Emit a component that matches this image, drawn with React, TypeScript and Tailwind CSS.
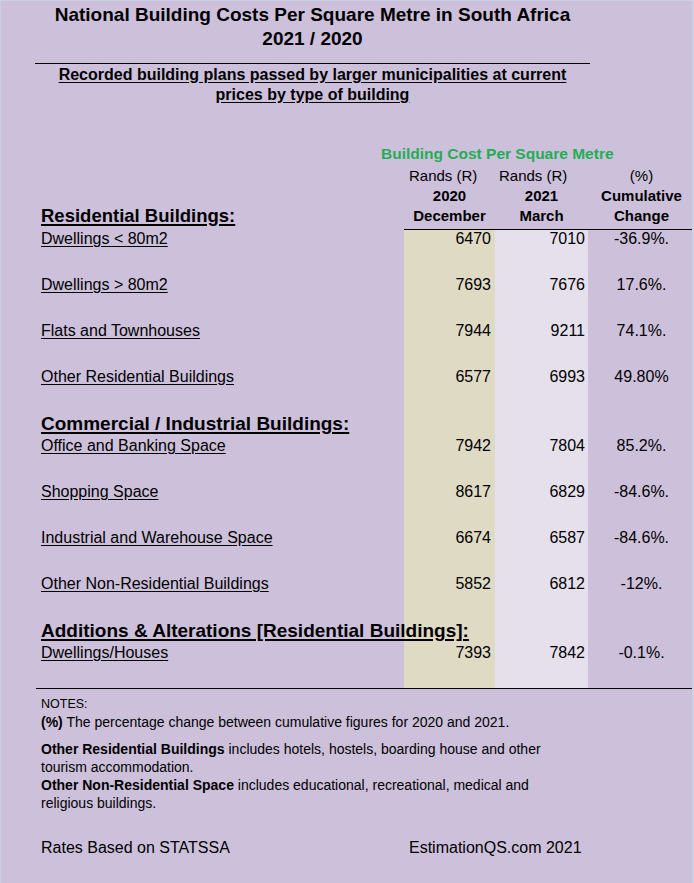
import React from 'react';

type Row = { label: string; dec: string; mar: string; change: string };

const residential: Row[] = [
  { label: 'Dwellings < 80m2', dec: '6470', mar: '7010', change: '-36.9%.' },
  { label: 'Dwellings > 80m2', dec: '7693', mar: '7676', change: '17.6%.' },
  { label: 'Flats and Townhouses', dec: '7944', mar: '9211', change: '74.1%.' },
  { label: 'Other Residential Buildings', dec: '6577', mar: '6993', change: '49.80%' },
];

const commercial: Row[] = [
  { label: 'Office and Banking Space', dec: '7942', mar: '7804', change: '85.2%.' },
  { label: 'Shopping Space', dec: '8617', mar: '6829', change: '-84.6%.' },
  { label: 'Industrial and Warehouse Space', dec: '6674', mar: '6587', change: '-84.6%.' },
  { label: 'Other Non-Residential Buildings', dec: '5852', mar: '6812', change: '-12%.' },
];

const additions: Row[] = [
  { label: 'Dwellings/Houses', dec: '7393', mar: '7842', change: '-0.1%.' },
];

const cols = 'grid grid-cols-[368px_91px_93px_107px]';

function DataRow({ row }: { row: Row }) {
  return (
    <div className={`${cols} h-[23px] items-start text-[16px] leading-[18px]`}>
      <div className="pl-[5px]">
        <span className="underline underline-offset-2">{row.label}</span>
      </div>
      <div className="text-right pr-[4px]">{row.dec}</div>
      <div className="text-right pr-[3px]">{row.mar}</div>
      <div className="text-center">{row.change}</div>
    </div>
  );
}

function Blank() {
  return <div className="h-[23px]" />;
}

function Section({ title }: { title: string }) {
  return (
    <div className="h-[23px] pl-[5px] text-[19px] leading-[20px] font-bold whitespace-nowrap">
      <span className="underline decoration-2 underline-offset-2">{title}</span>
    </div>
  );
}

function Rows({ rows }: { rows: Row[] }) {
  return (
    <>
      {rows.map((r, i) => (
        <React.Fragment key={r.label}>
          <DataRow row={r} />
          {i < rows.length - 1 && <Blank />}
        </React.Fragment>
      ))}
    </>
  );
}

export default function App() {
  return (
    <div className="w-[694px] h-[883px] bg-[#cdc0db] border-l border-t border-r-2 border-[#c8d2e4] text-black font-['Liberation_Sans',sans-serif] overflow-hidden">
      {/* title block */}
      <div className="ml-[34px] w-[555px] text-center">
        <h1 className="pt-[2px] text-[19px] leading-[24px] font-bold">
          National Building Costs Per Square Metre in South Africa
          <br />
          2021 / 2020
        </h1>
        <div className="mt-[12px] border-t border-black pt-[1px] text-[16px] leading-[20px] font-bold whitespace-nowrap">
          <span className="underline underline-offset-2">
            Recorded building plans passed by larger municipalities at current
            <br />
            prices by type of building
          </span>
        </div>
      </div>

      {/* column headings */}
      <div className="mt-[39px] pl-[380px] text-[15.5px] leading-[20px] font-bold text-[#1fae55]">
        Building Cost Per Square Metre
      </div>
      <div className="ml-[35px] mt-[2px] grid grid-cols-[368px_91px_93px_107px] text-[15px] leading-[20px]">
        <div />
        <div className="pl-[5px]">Rands (R)</div>
        <div className="pl-[4px]">Rands (R)</div>
        <div className="text-center">(%)</div>
        <div />
        <div className="text-center font-bold">2020</div>
        <div className="text-center font-bold">2021</div>
        <div className="text-center font-bold">Cumulative</div>
        <div className="pl-[5px] text-[18.5px] font-bold">
          <span className="underline decoration-2 underline-offset-2">Residential Buildings:</span>
        </div>
        <div className="text-center font-bold">December</div>
        <div className="text-center font-bold">March</div>
        <div className="text-center font-bold">Change</div>
      </div>
      <div className="ml-[403px] mt-[3px] border-t border-black" />

      {/* body with coloured value columns */}
      <div className="ml-[35px] bg-[linear-gradient(to_right,transparent_368px,#dedac4_368px,#dedac4_459px,#e6e0ed_459px,#e6e0ed_552px,transparent_552px)]">
        <Rows rows={residential} />
        <Blank />
        <Section title="Commercial / Industrial Buildings:" />
        <Rows rows={commercial} />
        <Blank />
        <Section title="Additions & Alterations [Residential Buildings]:" />
        <Rows rows={additions} />
        <div className="h-[21px]" />
      </div>
      <div className="ml-[35px] border-t border-black" />

      {/* notes */}
      <div className="ml-[40px] mt-[6px] text-[14px] leading-[18px] whitespace-nowrap">
        <p className="text-[12.5px]">NOTES:</p>
        <p>
          <b>(%)</b> The percentage change between cumulative figures for 2020 and 2021.
        </p>
        <p className="mt-[9px]">
          <b>Other Residential Buildings</b> includes hotels, hostels, boarding house and other
          <br />
          tourism accommodation.
        </p>
        <p>
          <b>Other Non-Residential Space</b> includes educational, recreational, medical and
          <br />
          religious buildings.
        </p>
      </div>

      {/* footer */}
      <div className="mt-[26px] ml-[40px] grid grid-cols-[368px_1fr] text-[16px] leading-[20px]">
        <div>Rates Based on STATSSA</div>
        <div>EstimationQS.com 2021</div>
      </div>
    </div>
  );
}
